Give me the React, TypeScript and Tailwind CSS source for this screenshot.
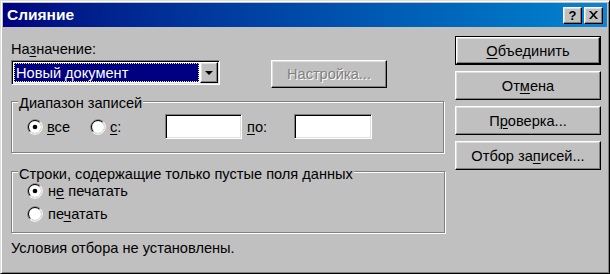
import React from "react";

// Win98-style "Слияние" (mail merge) dialog

function U({ children }: { children: React.ReactNode }) {
  return <span className="underline decoration-1 underline-offset-[2px]">{children}</span>;
}

function Radio({ checked }: { checked?: boolean }) {
  return (
    <svg width="16" height="16" viewBox="0 0 16 16" className="shrink-0">
      <circle cx="8" cy="8" r="6" fill="#fff" />
      <path d="M2.7 13.3A7.5 7.5 0 0 1 13.3 2.7" fill="none" stroke="#808080" />
      <path d="M13.3 2.7A7.5 7.5 0 0 1 2.7 13.3" fill="none" stroke="#fff" />
      <path d="M3.4 12.6A6.5 6.5 0 0 1 12.6 3.4" fill="none" stroke="#000" />
      <path d="M12.6 3.4A6.5 6.5 0 0 1 3.4 12.6" fill="none" stroke="#dfdfdf" />
      {checked && <circle cx="8" cy="8" r="2.3" fill="#000" />}
    </svg>
  );
}

function Bevel({ children, className = "" }: { children?: React.ReactNode; className?: string }) {
  return (
    <div
      className={
        "flex items-center justify-center border border-t-white border-l-white border-r-black border-b-black shadow-[inset_-1px_-1px_0_#808080,inset_1px_1px_0_#dfdfdf] bg-[#c0c0c0] " +
        className
      }
    >
      {children}
    </div>
  );
}

function Btn({ children, def }: { children: React.ReactNode; def?: boolean }) {
  if (def) {
    return (
      <div className="h-[29px] w-[146px] border border-black">
        <Bevel className="h-full w-full">{children}</Bevel>
      </div>
    );
  }
  return <Bevel className="h-[29px] w-[146px]">{children}</Bevel>;
}

function Field({ className = "" }: { className?: string }) {
  return (
    <div
      className={
        "h-[25px] bg-white border border-t-[#808080] border-l-[#808080] border-r-white border-b-white shadow-[inset_1px_1px_0_#000,inset_-1px_-1px_0_#dfdfdf] " +
        className
      }
    />
  );
}

function Group({
  label,
  top,
  className = "",
  children,
}: {
  label: string;
  top: string;
  className?: string;
  children: React.ReactNode;
}) {
  return (
    <div
      className={
        "relative border border-[#808080] shadow-[inset_1px_1px_0_#fff,1px_1px_0_#fff] " + className
      }
    >
      <span className={"absolute left-[6px] bg-[#c0c0c0] px-[1px] leading-[16px] " + top}>{label}</span>
      {children}
    </div>
  );
}

export default function App() {
  return (
    <div className="h-[274px] w-[610px] overflow-hidden bg-white font-['Liberation_Sans',Arial,sans-serif] text-[14.6px] leading-[16px] text-black">
      <div className="h-full w-full border border-t-[#dfdfdf] border-l-[#dfdfdf] border-r-black border-b-black bg-[#c0c0c0] p-[2px] shadow-[inset_1px_1px_0_#fff,inset_-1px_-1px_0_#808080]">
        {/* title bar */}
        <div className="flex h-[24px] items-center bg-gradient-to-r from-[#000080] to-[#1084d0] pl-[4px] pr-[4px]">
          <span className="text-[15.5px] font-bold text-white">Слияние</span>
          <div className="ml-auto flex gap-[2px]">
            <Bevel className="h-[17px] w-[19px]">
              <span className="text-[13px] font-bold leading-none">?</span>
            </Bevel>
            <Bevel className="h-[17px] w-[19px]">
              <svg width="9" height="8" viewBox="0 0 9 8">
                <path d="M0 0h2l2.5 2.7L7 0h2L5.5 4 9 8H7L4.5 5.3 2 8H0l3.5-4z" fill="#000" />
              </svg>
            </Bevel>
          </div>
        </div>

        {/* body */}
        <div className="flex pl-[8px]">
          <div className="w-[434px]">
            <div className="mt-[14px]">
              На<U>з</U>начение:
            </div>

            <div className="mt-[3px] flex items-start">
              <div className="flex h-[25px] w-[209px] border border-t-[#808080] border-l-[#808080] border-r-white border-b-white bg-white p-[1px] shadow-[inset_1px_1px_0_#000,inset_-1px_-1px_0_#dfdfdf]">
                <div className="m-[1px] flex flex-1 items-center border border-dotted border-[#e8e890] bg-[#000080] pl-[1px] text-white">
                  Новый документ
                </div>
                <Bevel className="h-full w-[18px]">
                  <svg width="8" height="4" viewBox="0 0 8 4">
                    <path d="M0 0h8L4 4z" fill="#000" />
                  </svg>
                </Bevel>
              </div>
              <Bevel className="ml-[51px] h-[28px] w-[116px]">
                <span className="text-[#808080] [text-shadow:1px_1px_0_#fff]">Настройка...</span>
              </Bevel>
            </div>

            <Group label="Диапазон записей" top="top-[-7px]" className="mt-[13px] h-[52px] w-[433px]">
              <div className="mt-[12px] flex h-[25px] items-center pl-[15px]">
                <div className="flex w-[63px] items-center gap-[4px]">
                  <Radio checked />
                  <span>
                    <U>в</U>се
                  </span>
                </div>
                <div className="flex w-[75px] items-center gap-[4px]">
                  <Radio />
                  <span>
                    <U>с</U>:
                  </span>
                </div>
                <Field className="w-[77px]" />
                <span className="w-[52px] pl-[5px]">
                  <U>п</U>о:
                </span>
                <Field className="w-[78px]" />
              </div>
            </Group>

            <Group
              label="Строки, содержащие только пустые поля данных"
              top="top-[-6px]"
              className="mt-[18px] h-[62px] w-[434px]"
            >
              <div className="flex flex-col gap-[3px] pl-[15px] pt-[9px]">
                <div className="flex h-[20px] items-center gap-[5px]">
                  <Radio checked />
                  <span>
                    н<U>е</U> печатать
                  </span>
                </div>
                <div className="flex h-[20px] items-center gap-[5px]">
                  <Radio />
                  <span>
                    пе<U>ч</U>атать
                  </span>
                </div>
              </div>
            </Group>

            <div className="mt-[7px]">Условия отбора не установлены.</div>
          </div>

          <div className="ml-[10px] mt-[9px] flex flex-col gap-[6px]">
            <Btn def>
              <span>
                <U>О</U>бъединить
              </span>
            </Btn>
            <Btn>
              <span>
                От<U>м</U>ена
              </span>
            </Btn>
            <Btn>
              <span>
                П<U>р</U>оверка...
              </span>
            </Btn>
            <Btn>
              <span>
                Отбор за<U>п</U>исей...
              </span>
            </Btn>
          </div>
        </div>
      </div>
    </div>
  );
}
